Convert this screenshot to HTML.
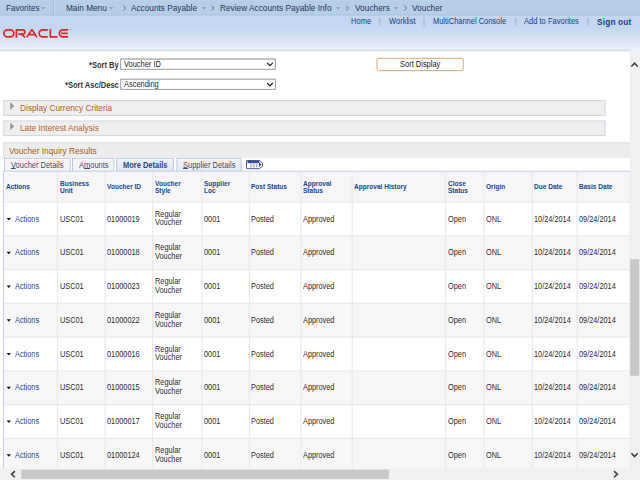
<!DOCTYPE html>
<html><head><meta charset="utf-8"><title>Voucher</title>
<style>
html,body{margin:0;padding:0;}
body{width:640px;height:480px;overflow:hidden;background:#fff;position:relative;font-family:"Liberation Sans",sans-serif;}
.t{position:absolute;white-space:nowrap;line-height:10px;}
.b{position:absolute;box-sizing:border-box;}
svg{position:absolute;overflow:visible;}
u{text-decoration:underline;text-decoration-thickness:0.7px;text-underline-offset:0px;}
</style></head><body>
<div class="b" style="left:0;top:0;width:640px;height:51px;background:linear-gradient(#c3d8f0 0px,#c3d8f0 28px,#cbddf1 33px,#d6e3f4 38px,#e0e9f6 44px,#ecf1f9 50px,#ecf1f9 51px);"></div>
<svg style="left:0;top:0" width="640" height="480" viewBox="0 0 640 480">
<rect x="0.00" y="0.00" width="640.00" height="15.30" fill="#b6cee8" rx="0" />
<rect x="0.00" y="0.00" width="640.00" height="0.80" fill="#bdd3eb" rx="0" />
<rect x="0.00" y="14.60" width="640.00" height="0.90" fill="#a9c4e3" rx="0" />
<rect x="0.00" y="49.80" width="629.80" height="1.10" fill="#d2d9e2" rx="0" />
<rect x="0.00" y="50.90" width="629.80" height="0.60" fill="#eceff3" rx="0" />
<rect x="53.30" y="1.00" width="0.90" height="14.00" fill="#9fbbdb" rx="0" />
<rect x="54.20" y="1.00" width="0.90" height="14.00" fill="#cbddf2" rx="0" />
<path d="M41.2 7.2h4.2l-2.1 2.2z" fill="#7e9bc4"  />
<path d="M109 7.2h4.2l-2.1 2.2z" fill="#7e9bc4"  />
<path d="M202 7.2h4.2l-2.1 2.2z" fill="#7e9bc4"  />
<path d="M336.2 7.2h4.2l-2.1 2.2z" fill="#7e9bc4"  />
<path d="M393.8 7.2h4.2l-2.1 2.2z" fill="#7e9bc4"  />
<path d="M123.2 5.7l2.5 2.4l-2.5 2.4" fill="none" stroke="#54657f" stroke-width="0.9" />
<path d="M211.6 5.7l2.5 2.4l-2.5 2.4" fill="none" stroke="#54657f" stroke-width="0.9" />
<path d="M346.0 5.7l2.5 2.4l-2.5 2.4" fill="none" stroke="#54657f" stroke-width="0.9" />
<path d="M404.2 5.7l2.5 2.4l-2.5 2.4" fill="none" stroke="#54657f" stroke-width="0.9" />
<rect x="379.30" y="17.60" width="0.90" height="8.20" fill="#a0a9bc" rx="0" />
<rect x="423.60" y="17.60" width="0.90" height="8.20" fill="#a0a9bc" rx="0" />
<rect x="515.30" y="17.60" width="0.90" height="8.20" fill="#a0a9bc" rx="0" />
<rect x="587.60" y="17.60" width="0.90" height="8.20" fill="#a0a9bc" rx="0" />
<rect x="120.75" y="59.05" width="154.60" height="10.20" fill="#fff" stroke="#909090" stroke-width="0.9" rx="0" />
<rect x="120.80" y="58.60" width="154.50" height="0.90" fill="#b8b8b8" rx="0" />
<path d="M267.20 62.80l2.8 2.9l2.8 -2.9" fill="none" stroke="#1a1a1a" stroke-width="1.1" />
<rect x="120.75" y="79.25" width="154.60" height="10.10" fill="#fff" stroke="#909090" stroke-width="0.9" rx="0" />
<rect x="120.80" y="78.80" width="154.50" height="0.90" fill="#b8b8b8" rx="0" />
<path d="M267.20 83.00l2.8 2.9l2.8 -2.9" fill="none" stroke="#1a1a1a" stroke-width="1.1" />
<rect x="377.00" y="58.30" width="86.30" height="12.30" fill="#fff" stroke="#dfa87c" stroke-width="1" rx="1.6" />
<rect x="3.85" y="100.65" width="601.30" height="14.70" fill="#efefef" stroke="#cbd3dd" stroke-width="0.9" rx="0" />
<path d="M10.2 102.10l4 3.95l-4 3.95z" fill="#9a9a9a"  />
<rect x="3.85" y="120.95" width="601.30" height="14.70" fill="#efefef" stroke="#cbd3dd" stroke-width="0.9" rx="0" />
<path d="M10.2 122.40l4 3.95l-4 3.95z" fill="#9a9a9a"  />
<rect x="3.40" y="142.60" width="626.60" height="15.20" fill="#ededed" rx="0" />
<rect x="3.40" y="142.40" width="626.60" height="0.90" fill="#d3dbe6" rx="0" />
<rect x="3.20" y="142.40" width="0.90" height="15.40" fill="#d3dbe6" rx="0" />
<defs><linearGradient id="g1" x1="0" y1="0" x2="0" y2="1"><stop offset="0" stop-color="#eef2f9"/><stop offset="1" stop-color="#e0e7f2"/></linearGradient><linearGradient id="g2" x1="0" y1="0" x2="0" y2="1"><stop offset="0" stop-color="#f0f3f9"/><stop offset="1" stop-color="#e6ebf4"/></linearGradient></defs>
<rect x="4.50" y="158.40" width="65.80" height="13.00" fill="#f4f4f4" stroke="#bcc8dc" stroke-width="1" rx="0" />
<rect x="5.00" y="158.90" width="64.80" height="0.80" fill="#fbfbfd" rx="0" />
<rect x="72.50" y="158.40" width="41.40" height="13.00" fill="#f4f4f4" stroke="#bcc8dc" stroke-width="1" rx="0" />
<rect x="73.00" y="158.90" width="40.40" height="0.80" fill="#fbfbfd" rx="0" />
<rect x="116.70" y="158.40" width="56.80" height="13.00" fill="url(#g1)" stroke="#bcc8dc" stroke-width="1" rx="0" />
<rect x="117.20" y="158.90" width="55.80" height="0.80" fill="#fbfbfd" rx="0" />
<rect x="176.90" y="158.40" width="64.20" height="13.00" fill="url(#g2)" stroke="#bcc8dc" stroke-width="1" rx="0" />
<rect x="177.40" y="158.90" width="63.20" height="0.80" fill="#fbfbfd" rx="0" />
<rect x="3.40" y="171.20" width="626.60" height="30.90" fill="#f6f6f6" rx="0" />
<rect x="3.40" y="202.10" width="626.60" height="34.05" fill="#ffffff" rx="0" />
<rect x="3.40" y="235.85" width="626.60" height="34.05" fill="#f7f7f7" rx="0" />
<rect x="3.40" y="269.60" width="626.60" height="34.05" fill="#ffffff" rx="0" />
<rect x="3.40" y="303.35" width="626.60" height="34.05" fill="#f7f7f7" rx="0" />
<rect x="3.40" y="337.10" width="626.60" height="34.05" fill="#ffffff" rx="0" />
<rect x="3.40" y="370.85" width="626.60" height="34.05" fill="#f7f7f7" rx="0" />
<rect x="3.40" y="404.60" width="626.60" height="34.05" fill="#ffffff" rx="0" />
<rect x="3.40" y="438.35" width="626.60" height="34.05" fill="#f7f7f7" rx="0" />
<rect x="3.40" y="201.50" width="626.60" height="1.20" fill="#ebebeb" rx="0" />
<rect x="3.40" y="235.25" width="626.60" height="1.20" fill="#ebebeb" rx="0" />
<rect x="3.40" y="269.00" width="626.60" height="1.20" fill="#ebebeb" rx="0" />
<rect x="3.40" y="302.75" width="626.60" height="1.20" fill="#ebebeb" rx="0" />
<rect x="3.40" y="336.50" width="626.60" height="1.20" fill="#ebebeb" rx="0" />
<rect x="3.40" y="370.25" width="626.60" height="1.20" fill="#ebebeb" rx="0" />
<rect x="3.40" y="404.00" width="626.60" height="1.20" fill="#ebebeb" rx="0" />
<rect x="3.40" y="437.75" width="626.60" height="1.20" fill="#ebebeb" rx="0" />
<rect x="3.40" y="170.70" width="627.60" height="1.10" fill="#c9d5ea" rx="0" />
<rect x="56.90" y="171.80" width="1.20" height="308.80" fill="#ebebeb" rx="0" />
<rect x="104.60" y="171.80" width="1.20" height="308.80" fill="#ebebeb" rx="0" />
<rect x="152.00" y="171.80" width="1.20" height="308.80" fill="#ebebeb" rx="0" />
<rect x="201.40" y="171.80" width="1.20" height="308.80" fill="#ebebeb" rx="0" />
<rect x="248.90" y="171.80" width="1.20" height="308.80" fill="#ebebeb" rx="0" />
<rect x="300.20" y="171.80" width="1.20" height="308.80" fill="#ebebeb" rx="0" />
<rect x="351.60" y="171.80" width="1.20" height="308.80" fill="#ebebeb" rx="0" />
<rect x="444.90" y="171.80" width="1.20" height="308.80" fill="#ebebeb" rx="0" />
<rect x="483.40" y="171.80" width="1.20" height="308.80" fill="#ebebeb" rx="0" />
<rect x="531.80" y="171.80" width="1.20" height="308.80" fill="#ebebeb" rx="0" />
<rect x="576.60" y="171.80" width="1.20" height="308.80" fill="#ebebeb" rx="0" />
<rect x="2.90" y="171.20" width="1.00" height="308.80" fill="#c6d2e6" rx="0" />
<rect x="629.50" y="171.20" width="1.00" height="308.80" fill="#ececec" rx="0" />
<path d="M6.6 217.95h4.4l-2.2 2.5z" fill="#111"  />
<path d="M6.6 251.70h4.4l-2.2 2.5z" fill="#111"  />
<path d="M6.6 285.45h4.4l-2.2 2.5z" fill="#111"  />
<path d="M6.6 319.20h4.4l-2.2 2.5z" fill="#111"  />
<path d="M6.6 352.95h4.4l-2.2 2.5z" fill="#111"  />
<path d="M6.6 386.70h4.4l-2.2 2.5z" fill="#111"  />
<path d="M6.6 420.45h4.4l-2.2 2.5z" fill="#111"  />
<path d="M6.6 454.20h4.4l-2.2 2.5z" fill="#111"  />
</svg>
<svg style="left:2.5px;top:28.9px" width="69" height="8.65" viewBox="0 0 276 34.6">
<g fill="none" stroke="#e3202a" stroke-width="6.8" stroke-linejoin="round">
<rect x="3.4" y="3.4" width="40" height="27.8" rx="13.9"/>
<path d="M53.5 34.6V3.4H79a8.5 8.5 0 0 1 0 17H61M73 20.4L88.5 33.5"/>
<path d="M95 33.5L113.5 4.6Q115.5 1.8 117.5 4.6L136 33.5M104 22.5H127"/>
<path d="M179 3.4H158.5a13.9 13.9 0 0 0 0 27.8H179"/>
<path d="M189.5 0V31.2H218"/>
<path d="M261 3.4H239.5a13.9 13.9 0 0 0 0 27.8H261M233 17.3H259"/>
</g>
<circle cx="270" cy="3" r="1.8" fill="none" stroke="#e3202a" stroke-width="1"/>
</svg>
<svg style="left:246px;top:160.1px" width="17" height="9.2" viewBox="0 0 34 18" preserveAspectRatio="none">
<path d="M2 1H27L33 6V12L27 17H2Q1 17 1 16V2Q1 1 2 1Z" fill="#fff" stroke="#4c4c86" stroke-width="1.9"/>
<rect x="3" y="2" width="23.5" height="4.2" fill="#3346a8"/>
<rect x="8.6" y="7.4" width="3" height="7" fill="#a3aed3"/>
<rect x="14.2" y="7.4" width="3" height="7" fill="#a3aed3"/>
<rect x="19.8" y="7.4" width="3" height="7" fill="#a3aed3"/>
<path d="M26 4.5L31 9L26 13.5Z" fill="#3346a8"/>
</svg>
<div class="t" style="left:5.50px;top:3px;font-size:8.8px;color:#25355a;transform:scaleX(0.9259);transform-origin:0 0;">Favorites</div>
<div class="t" style="left:65.60px;top:3px;font-size:8.91px;color:#25355a;transform:scaleX(0.9259);transform-origin:0 0;">Main Menu</div>
<div class="t" style="left:131.40px;top:3px;font-size:8.91px;color:#25355a;transform:scaleX(0.9259);transform-origin:0 0;">Accounts Payable</div>
<div class="t" style="left:220.20px;top:3px;font-size:8.96px;color:#25355a;transform:scaleX(0.9259);transform-origin:0 0;">Review Accounts Payable Info</div>
<div class="t" style="left:354.60px;top:3px;font-size:9.02px;color:#25355a;transform:scaleX(0.9259);transform-origin:0 0;">Vouchers</div>
<div class="t" style="left:412.20px;top:3px;font-size:9.02px;color:#25355a;transform:scaleX(0.9259);transform-origin:0 0;">Voucher</div>
<div class="t" style="left:351.30px;top:16px;font-size:8.53px;color:#173f87;transform:scaleX(0.8850);transform-origin:0 0;">Home</div>
<div class="t" style="left:388.90px;top:16px;font-size:8.53px;color:#173f87;transform:scaleX(0.8850);transform-origin:0 0;">Worklist</div>
<div class="t" style="left:433.10px;top:16px;font-size:8.45px;color:#173f87;transform:scaleX(0.8850);transform-origin:0 0;">MultiChannel Console</div>
<div class="t" style="left:524.10px;top:16px;font-size:8.53px;color:#173f87;transform:scaleX(0.8850);transform-origin:0 0;">Add to Favorites</div>
<div class="t" style="left:597.00px;top:18px;font-size:8.2px;color:#173a85;font-weight:bold;letter-spacing:0.22px;">Sign out</div>
<div class="t" style="left:89.20px;top:60px;font-size:8.68px;color:#333;font-weight:bold;transform:scaleX(0.8696);transform-origin:0 0;">*Sort By</div>
<div class="t" style="left:65.40px;top:80px;font-size:8.68px;color:#333;font-weight:bold;transform:scaleX(0.8696);transform-origin:0 0;">*Sort Asc/Desc</div>
<div class="t" style="left:123.50px;top:59px;font-size:8.49px;color:#1e1e1e;transform:scaleX(0.8772);transform-origin:0 0;">Voucher ID</div>
<div class="t" style="left:123.50px;top:79px;font-size:8.49px;color:#1e1e1e;transform:scaleX(0.8772);transform-origin:0 0;">Ascending</div>
<div class="t" style="left:399.90px;top:59px;font-size:8.62px;color:#222;transform:scaleX(0.8696);transform-origin:0 0;">Sort Display</div>
<div class="t" style="left:19.80px;top:103px;font-size:9.13px;color:#b5611f;transform:scaleX(0.9091);transform-origin:0 0;">Display Currency Criteria</div>
<div class="t" style="left:19.80px;top:123px;font-size:9.13px;color:#b5611f;transform:scaleX(0.9091);transform-origin:0 0;">Late Interest Analysis</div>
<div class="t" style="left:8.50px;top:146px;font-size:9.13px;color:#a35d22;transform:scaleX(0.9091);transform-origin:0 0;">Voucher Inquiry Results</div>
<div class="t" style="left:10.60px;top:160px;font-size:8.4px;color:#3b4d6b;transform:scaleX(0.8929);transform-origin:0 0;"><u>V</u>oucher Details</div>
<div class="t" style="left:78.60px;top:160px;font-size:8.4px;color:#3b4d6b;transform:scaleX(0.8929);transform-origin:0 0;">A<u>m</u>ounts</div>
<div class="t" style="left:123.20px;top:160px;font-size:8.4px;color:#2c4577;font-weight:bold;transform:scaleX(0.8929);transform-origin:0 0;">More Details</div>
<div class="t" style="left:183.00px;top:160px;font-size:8.4px;color:#3b4d6b;transform:scaleX(0.8929);transform-origin:0 0;"><u>S</u>upplier Details</div>
<div class="t" style="left:6.20px;top:182px;font-size:6.94px;color:#21478a;font-weight:bold;transform:scaleX(0.9434);transform-origin:0 0;">Actions</div>
<div class="t" style="left:59.50px;top:179px;font-size:6.94px;color:#21478a;font-weight:bold;transform:scaleX(0.9434);transform-origin:0 0;">Business</div>
<div class="t" style="left:59.50px;top:186px;font-size:6.94px;color:#21478a;font-weight:bold;transform:scaleX(0.9434);transform-origin:0 0;">Unit</div>
<div class="t" style="left:107.00px;top:182px;font-size:6.94px;color:#21478a;font-weight:bold;transform:scaleX(0.9434);transform-origin:0 0;">Voucher ID</div>
<div class="t" style="left:154.50px;top:179px;font-size:6.94px;color:#21478a;font-weight:bold;transform:scaleX(0.9434);transform-origin:0 0;">Voucher</div>
<div class="t" style="left:154.50px;top:186px;font-size:6.94px;color:#21478a;font-weight:bold;transform:scaleX(0.9434);transform-origin:0 0;">Style</div>
<div class="t" style="left:204.40px;top:179px;font-size:6.94px;color:#21478a;font-weight:bold;transform:scaleX(0.9434);transform-origin:0 0;">Supplier</div>
<div class="t" style="left:204.40px;top:186px;font-size:6.94px;color:#21478a;font-weight:bold;transform:scaleX(0.9434);transform-origin:0 0;">Loc</div>
<div class="t" style="left:251.20px;top:182px;font-size:6.94px;color:#21478a;font-weight:bold;transform:scaleX(0.9434);transform-origin:0 0;">Post Status</div>
<div class="t" style="left:303.00px;top:179px;font-size:6.94px;color:#21478a;font-weight:bold;transform:scaleX(0.9434);transform-origin:0 0;">Approval</div>
<div class="t" style="left:303.00px;top:186px;font-size:6.94px;color:#21478a;font-weight:bold;transform:scaleX(0.9434);transform-origin:0 0;">Status</div>
<div class="t" style="left:354.20px;top:182px;font-size:6.94px;color:#21478a;font-weight:bold;transform:scaleX(0.9434);transform-origin:0 0;">Approval History</div>
<div class="t" style="left:448.00px;top:179px;font-size:6.94px;color:#21478a;font-weight:bold;transform:scaleX(0.9434);transform-origin:0 0;">Close</div>
<div class="t" style="left:448.00px;top:186px;font-size:6.94px;color:#21478a;font-weight:bold;transform:scaleX(0.9434);transform-origin:0 0;">Status</div>
<div class="t" style="left:486.40px;top:182px;font-size:6.94px;color:#21478a;font-weight:bold;transform:scaleX(0.9434);transform-origin:0 0;">Origin</div>
<div class="t" style="left:534.30px;top:182px;font-size:6.94px;color:#21478a;font-weight:bold;transform:scaleX(0.9434);transform-origin:0 0;">Due Date</div>
<div class="t" style="left:579.30px;top:182px;font-size:6.94px;color:#21478a;font-weight:bold;transform:scaleX(0.9434);transform-origin:0 0;">Basis Date</div>
<div class="t" style="left:15.20px;top:214px;font-size:8.31px;color:#234a86;transform:scaleX(0.8850);transform-origin:0 0;">Actions</div>
<div class="t" style="left:59.50px;top:214px;font-size:8.31px;color:#2b2b2b;transform:scaleX(0.8850);transform-origin:0 0;">USC01</div>
<div class="t" style="left:107.00px;top:214px;font-size:8.31px;color:#2b2b2b;transform:scaleX(0.8850);transform-origin:0 0;">01000019</div>
<div class="t" style="left:154.50px;top:209px;font-size:8.31px;color:#2b2b2b;transform:scaleX(0.8850);transform-origin:0 0;">Regular</div>
<div class="t" style="left:154.50px;top:217px;font-size:8.31px;color:#2b2b2b;transform:scaleX(0.8850);transform-origin:0 0;">Voucher</div>
<div class="t" style="left:203.80px;top:214px;font-size:8.31px;color:#2b2b2b;transform:scaleX(0.8850);transform-origin:0 0;">0001</div>
<div class="t" style="left:251.20px;top:214px;font-size:8.31px;color:#2b2b2b;transform:scaleX(0.8850);transform-origin:0 0;">Posted</div>
<div class="t" style="left:303.00px;top:214px;font-size:8.31px;color:#2b2b2b;transform:scaleX(0.8850);transform-origin:0 0;">Approved</div>
<div class="t" style="left:448.00px;top:214px;font-size:8.31px;color:#2b2b2b;transform:scaleX(0.8850);transform-origin:0 0;">Open</div>
<div class="t" style="left:486.40px;top:214px;font-size:8.31px;color:#2b2b2b;transform:scaleX(0.8850);transform-origin:0 0;">ONL</div>
<div class="t" style="left:534.30px;top:214px;font-size:8.31px;color:#2b2b2b;transform:scaleX(0.8850);transform-origin:0 0;">10/24/2014</div>
<div class="t" style="left:579.30px;top:214px;font-size:8.31px;color:#2b2b2b;transform:scaleX(0.8850);transform-origin:0 0;">09/24/2014</div>
<div class="t" style="left:15.20px;top:247px;font-size:8.31px;color:#234a86;transform:scaleX(0.8850);transform-origin:0 0;">Actions</div>
<div class="t" style="left:59.50px;top:247px;font-size:8.31px;color:#2b2b2b;transform:scaleX(0.8850);transform-origin:0 0;">USC01</div>
<div class="t" style="left:107.00px;top:247px;font-size:8.31px;color:#2b2b2b;transform:scaleX(0.8850);transform-origin:0 0;">01000018</div>
<div class="t" style="left:154.50px;top:242px;font-size:8.31px;color:#2b2b2b;transform:scaleX(0.8850);transform-origin:0 0;">Regular</div>
<div class="t" style="left:154.50px;top:251px;font-size:8.31px;color:#2b2b2b;transform:scaleX(0.8850);transform-origin:0 0;">Voucher</div>
<div class="t" style="left:203.80px;top:247px;font-size:8.31px;color:#2b2b2b;transform:scaleX(0.8850);transform-origin:0 0;">0001</div>
<div class="t" style="left:251.20px;top:247px;font-size:8.31px;color:#2b2b2b;transform:scaleX(0.8850);transform-origin:0 0;">Posted</div>
<div class="t" style="left:303.00px;top:247px;font-size:8.31px;color:#2b2b2b;transform:scaleX(0.8850);transform-origin:0 0;">Approved</div>
<div class="t" style="left:448.00px;top:247px;font-size:8.31px;color:#2b2b2b;transform:scaleX(0.8850);transform-origin:0 0;">Open</div>
<div class="t" style="left:486.40px;top:247px;font-size:8.31px;color:#2b2b2b;transform:scaleX(0.8850);transform-origin:0 0;">ONL</div>
<div class="t" style="left:534.30px;top:247px;font-size:8.31px;color:#2b2b2b;transform:scaleX(0.8850);transform-origin:0 0;">10/24/2014</div>
<div class="t" style="left:579.30px;top:247px;font-size:8.31px;color:#2b2b2b;transform:scaleX(0.8850);transform-origin:0 0;">09/24/2014</div>
<div class="t" style="left:15.20px;top:281px;font-size:8.31px;color:#234a86;transform:scaleX(0.8850);transform-origin:0 0;">Actions</div>
<div class="t" style="left:59.50px;top:281px;font-size:8.31px;color:#2b2b2b;transform:scaleX(0.8850);transform-origin:0 0;">USC01</div>
<div class="t" style="left:107.00px;top:281px;font-size:8.31px;color:#2b2b2b;transform:scaleX(0.8850);transform-origin:0 0;">01000023</div>
<div class="t" style="left:154.50px;top:276px;font-size:8.31px;color:#2b2b2b;transform:scaleX(0.8850);transform-origin:0 0;">Regular</div>
<div class="t" style="left:154.50px;top:285px;font-size:8.31px;color:#2b2b2b;transform:scaleX(0.8850);transform-origin:0 0;">Voucher</div>
<div class="t" style="left:203.80px;top:281px;font-size:8.31px;color:#2b2b2b;transform:scaleX(0.8850);transform-origin:0 0;">0001</div>
<div class="t" style="left:251.20px;top:281px;font-size:8.31px;color:#2b2b2b;transform:scaleX(0.8850);transform-origin:0 0;">Posted</div>
<div class="t" style="left:303.00px;top:281px;font-size:8.31px;color:#2b2b2b;transform:scaleX(0.8850);transform-origin:0 0;">Approved</div>
<div class="t" style="left:448.00px;top:281px;font-size:8.31px;color:#2b2b2b;transform:scaleX(0.8850);transform-origin:0 0;">Open</div>
<div class="t" style="left:486.40px;top:281px;font-size:8.31px;color:#2b2b2b;transform:scaleX(0.8850);transform-origin:0 0;">ONL</div>
<div class="t" style="left:534.30px;top:281px;font-size:8.31px;color:#2b2b2b;transform:scaleX(0.8850);transform-origin:0 0;">10/24/2014</div>
<div class="t" style="left:579.30px;top:281px;font-size:8.31px;color:#2b2b2b;transform:scaleX(0.8850);transform-origin:0 0;">09/24/2014</div>
<div class="t" style="left:15.20px;top:315px;font-size:8.31px;color:#234a86;transform:scaleX(0.8850);transform-origin:0 0;">Actions</div>
<div class="t" style="left:59.50px;top:315px;font-size:8.31px;color:#2b2b2b;transform:scaleX(0.8850);transform-origin:0 0;">USC01</div>
<div class="t" style="left:107.00px;top:315px;font-size:8.31px;color:#2b2b2b;transform:scaleX(0.8850);transform-origin:0 0;">01000022</div>
<div class="t" style="left:154.50px;top:310px;font-size:8.31px;color:#2b2b2b;transform:scaleX(0.8850);transform-origin:0 0;">Regular</div>
<div class="t" style="left:154.50px;top:319px;font-size:8.31px;color:#2b2b2b;transform:scaleX(0.8850);transform-origin:0 0;">Voucher</div>
<div class="t" style="left:203.80px;top:315px;font-size:8.31px;color:#2b2b2b;transform:scaleX(0.8850);transform-origin:0 0;">0001</div>
<div class="t" style="left:251.20px;top:315px;font-size:8.31px;color:#2b2b2b;transform:scaleX(0.8850);transform-origin:0 0;">Posted</div>
<div class="t" style="left:303.00px;top:315px;font-size:8.31px;color:#2b2b2b;transform:scaleX(0.8850);transform-origin:0 0;">Approved</div>
<div class="t" style="left:448.00px;top:315px;font-size:8.31px;color:#2b2b2b;transform:scaleX(0.8850);transform-origin:0 0;">Open</div>
<div class="t" style="left:486.40px;top:315px;font-size:8.31px;color:#2b2b2b;transform:scaleX(0.8850);transform-origin:0 0;">ONL</div>
<div class="t" style="left:534.30px;top:315px;font-size:8.31px;color:#2b2b2b;transform:scaleX(0.8850);transform-origin:0 0;">10/24/2014</div>
<div class="t" style="left:579.30px;top:315px;font-size:8.31px;color:#2b2b2b;transform:scaleX(0.8850);transform-origin:0 0;">09/24/2014</div>
<div class="t" style="left:15.20px;top:349px;font-size:8.31px;color:#234a86;transform:scaleX(0.8850);transform-origin:0 0;">Actions</div>
<div class="t" style="left:59.50px;top:349px;font-size:8.31px;color:#2b2b2b;transform:scaleX(0.8850);transform-origin:0 0;">USC01</div>
<div class="t" style="left:107.00px;top:349px;font-size:8.31px;color:#2b2b2b;transform:scaleX(0.8850);transform-origin:0 0;">01000016</div>
<div class="t" style="left:154.50px;top:344px;font-size:8.31px;color:#2b2b2b;transform:scaleX(0.8850);transform-origin:0 0;">Regular</div>
<div class="t" style="left:154.50px;top:352px;font-size:8.31px;color:#2b2b2b;transform:scaleX(0.8850);transform-origin:0 0;">Voucher</div>
<div class="t" style="left:203.80px;top:349px;font-size:8.31px;color:#2b2b2b;transform:scaleX(0.8850);transform-origin:0 0;">0001</div>
<div class="t" style="left:251.20px;top:349px;font-size:8.31px;color:#2b2b2b;transform:scaleX(0.8850);transform-origin:0 0;">Posted</div>
<div class="t" style="left:303.00px;top:349px;font-size:8.31px;color:#2b2b2b;transform:scaleX(0.8850);transform-origin:0 0;">Approved</div>
<div class="t" style="left:448.00px;top:349px;font-size:8.31px;color:#2b2b2b;transform:scaleX(0.8850);transform-origin:0 0;">Open</div>
<div class="t" style="left:486.40px;top:349px;font-size:8.31px;color:#2b2b2b;transform:scaleX(0.8850);transform-origin:0 0;">ONL</div>
<div class="t" style="left:534.30px;top:349px;font-size:8.31px;color:#2b2b2b;transform:scaleX(0.8850);transform-origin:0 0;">10/24/2014</div>
<div class="t" style="left:579.30px;top:349px;font-size:8.31px;color:#2b2b2b;transform:scaleX(0.8850);transform-origin:0 0;">09/24/2014</div>
<div class="t" style="left:15.20px;top:382px;font-size:8.31px;color:#234a86;transform:scaleX(0.8850);transform-origin:0 0;">Actions</div>
<div class="t" style="left:59.50px;top:382px;font-size:8.31px;color:#2b2b2b;transform:scaleX(0.8850);transform-origin:0 0;">USC01</div>
<div class="t" style="left:107.00px;top:382px;font-size:8.31px;color:#2b2b2b;transform:scaleX(0.8850);transform-origin:0 0;">01000015</div>
<div class="t" style="left:154.50px;top:377px;font-size:8.31px;color:#2b2b2b;transform:scaleX(0.8850);transform-origin:0 0;">Regular</div>
<div class="t" style="left:154.50px;top:386px;font-size:8.31px;color:#2b2b2b;transform:scaleX(0.8850);transform-origin:0 0;">Voucher</div>
<div class="t" style="left:203.80px;top:382px;font-size:8.31px;color:#2b2b2b;transform:scaleX(0.8850);transform-origin:0 0;">0001</div>
<div class="t" style="left:251.20px;top:382px;font-size:8.31px;color:#2b2b2b;transform:scaleX(0.8850);transform-origin:0 0;">Posted</div>
<div class="t" style="left:303.00px;top:382px;font-size:8.31px;color:#2b2b2b;transform:scaleX(0.8850);transform-origin:0 0;">Approved</div>
<div class="t" style="left:448.00px;top:382px;font-size:8.31px;color:#2b2b2b;transform:scaleX(0.8850);transform-origin:0 0;">Open</div>
<div class="t" style="left:486.40px;top:382px;font-size:8.31px;color:#2b2b2b;transform:scaleX(0.8850);transform-origin:0 0;">ONL</div>
<div class="t" style="left:534.30px;top:382px;font-size:8.31px;color:#2b2b2b;transform:scaleX(0.8850);transform-origin:0 0;">10/24/2014</div>
<div class="t" style="left:579.30px;top:382px;font-size:8.31px;color:#2b2b2b;transform:scaleX(0.8850);transform-origin:0 0;">09/24/2014</div>
<div class="t" style="left:15.20px;top:416px;font-size:8.31px;color:#234a86;transform:scaleX(0.8850);transform-origin:0 0;">Actions</div>
<div class="t" style="left:59.50px;top:416px;font-size:8.31px;color:#2b2b2b;transform:scaleX(0.8850);transform-origin:0 0;">USC01</div>
<div class="t" style="left:107.00px;top:416px;font-size:8.31px;color:#2b2b2b;transform:scaleX(0.8850);transform-origin:0 0;">01000017</div>
<div class="t" style="left:154.50px;top:411px;font-size:8.31px;color:#2b2b2b;transform:scaleX(0.8850);transform-origin:0 0;">Regular</div>
<div class="t" style="left:154.50px;top:420px;font-size:8.31px;color:#2b2b2b;transform:scaleX(0.8850);transform-origin:0 0;">Voucher</div>
<div class="t" style="left:203.80px;top:416px;font-size:8.31px;color:#2b2b2b;transform:scaleX(0.8850);transform-origin:0 0;">0001</div>
<div class="t" style="left:251.20px;top:416px;font-size:8.31px;color:#2b2b2b;transform:scaleX(0.8850);transform-origin:0 0;">Posted</div>
<div class="t" style="left:303.00px;top:416px;font-size:8.31px;color:#2b2b2b;transform:scaleX(0.8850);transform-origin:0 0;">Approved</div>
<div class="t" style="left:448.00px;top:416px;font-size:8.31px;color:#2b2b2b;transform:scaleX(0.8850);transform-origin:0 0;">Open</div>
<div class="t" style="left:486.40px;top:416px;font-size:8.31px;color:#2b2b2b;transform:scaleX(0.8850);transform-origin:0 0;">ONL</div>
<div class="t" style="left:534.30px;top:416px;font-size:8.31px;color:#2b2b2b;transform:scaleX(0.8850);transform-origin:0 0;">10/24/2014</div>
<div class="t" style="left:579.30px;top:416px;font-size:8.31px;color:#2b2b2b;transform:scaleX(0.8850);transform-origin:0 0;">09/24/2014</div>
<div class="t" style="left:15.20px;top:450px;font-size:8.31px;color:#234a86;transform:scaleX(0.8850);transform-origin:0 0;">Actions</div>
<div class="t" style="left:59.50px;top:450px;font-size:8.31px;color:#2b2b2b;transform:scaleX(0.8850);transform-origin:0 0;">USC01</div>
<div class="t" style="left:107.00px;top:450px;font-size:8.31px;color:#2b2b2b;transform:scaleX(0.8850);transform-origin:0 0;">01000124</div>
<div class="t" style="left:154.50px;top:445px;font-size:8.31px;color:#2b2b2b;transform:scaleX(0.8850);transform-origin:0 0;">Regular</div>
<div class="t" style="left:154.50px;top:454px;font-size:8.31px;color:#2b2b2b;transform:scaleX(0.8850);transform-origin:0 0;">Voucher</div>
<div class="t" style="left:203.80px;top:450px;font-size:8.31px;color:#2b2b2b;transform:scaleX(0.8850);transform-origin:0 0;">0001</div>
<div class="t" style="left:251.20px;top:450px;font-size:8.31px;color:#2b2b2b;transform:scaleX(0.8850);transform-origin:0 0;">Posted</div>
<div class="t" style="left:303.00px;top:450px;font-size:8.31px;color:#2b2b2b;transform:scaleX(0.8850);transform-origin:0 0;">Approved</div>
<div class="t" style="left:448.00px;top:450px;font-size:8.31px;color:#2b2b2b;transform:scaleX(0.8850);transform-origin:0 0;">Open</div>
<div class="t" style="left:486.40px;top:450px;font-size:8.31px;color:#2b2b2b;transform:scaleX(0.8850);transform-origin:0 0;">ONL</div>
<div class="t" style="left:534.30px;top:450px;font-size:8.31px;color:#2b2b2b;transform:scaleX(0.8850);transform-origin:0 0;">10/24/2014</div>
<div class="t" style="left:579.30px;top:450px;font-size:8.31px;color:#2b2b2b;transform:scaleX(0.8850);transform-origin:0 0;">09/24/2014</div>
<svg style="left:0;top:0" width="640" height="480" viewBox="0 0 640 480">
<rect x="629.8" y="51" width="10.2" height="429" fill="#f0f0f0"/>
<rect x="630.2" y="259.2" width="9.0" height="116.6" fill="#c8c8c8"/>
<path d="M631.4 66.5l3.15 -3.4l3.15 3.4" fill="none" stroke="#3c3c3c" stroke-width="1.55"/>
<path d="M631.4 453.2l3.15 3.4l3.15 -3.4" fill="none" stroke="#3c3c3c" stroke-width="1.55"/>
<rect x="0" y="468.8" width="629.8" height="11.2" fill="#f0f0f0"/>
<rect x="21.2" y="469.7" width="367.6" height="9.1" fill="#c8c8c8"/>
<path d="M14.9 471.1l-3.3 3.1l3.3 3.1" fill="none" stroke="#3c3c3c" stroke-width="1.55"/>
<path d="M614.1 471.1l3.3 3.1l-3.3 3.1" fill="none" stroke="#3c3c3c" stroke-width="1.55"/>
</svg>
</body></html>
